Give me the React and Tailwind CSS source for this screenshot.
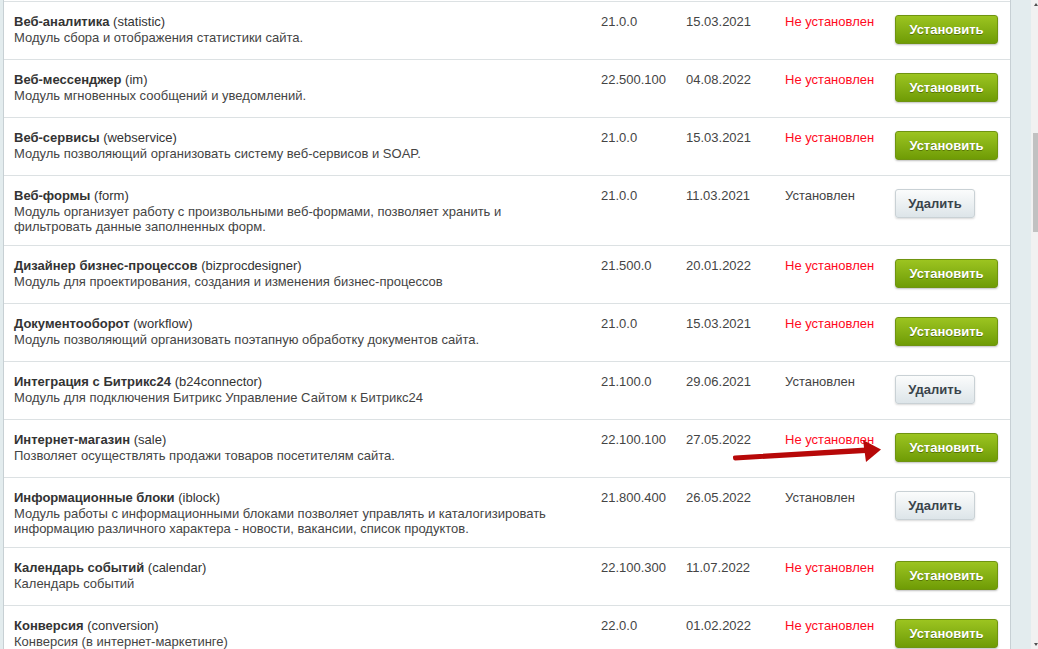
import React from "react";

const modules = [
  { name: "Веб-аналитика", id: "statistic", desc: ["Модуль сбора и отображения статистики сайта."], ver: "21.0.0", date: "15.03.2021", installed: false },
  { name: "Веб-мессенджер", id: "im", desc: ["Модуль мгновенных сообщений и уведомлений."], ver: "22.500.100", date: "04.08.2022", installed: false },
  { name: "Веб-сервисы", id: "webservice", desc: ["Модуль позволяющий организовать систему веб-сервисов и SOAP."], ver: "21.0.0", date: "15.03.2021", installed: false },
  { name: "Веб-формы", id: "form", desc: ["Модуль организует работу с произвольными веб-формами, позволяет хранить и", "фильтровать данные заполненных форм."], ver: "21.0.0", date: "11.03.2021", installed: true },
  { name: "Дизайнер бизнес-процессов", id: "bizprocdesigner", desc: ["Модуль для проектирования, создания и изменения бизнес-процессов"], ver: "21.500.0", date: "20.01.2022", installed: false },
  { name: "Документооборот", id: "workflow", desc: ["Модуль позволяющий организовать поэтапную обработку документов сайта."], ver: "21.0.0", date: "15.03.2021", installed: false },
  { name: "Интеграция с Битрикс24", id: "b24connector", desc: ["Модуль для подключения Битрикс Управление Сайтом к Битрикс24"], ver: "21.100.0", date: "29.06.2021", installed: true },
  { name: "Интернет-магазин", id: "sale", desc: ["Позволяет осуществлять продажи товаров посетителям сайта."], ver: "22.100.100", date: "27.05.2022", installed: false },
  { name: "Информационные блоки", id: "iblock", desc: ["Модуль работы с информационными блоками позволяет управлять и каталогизировать", "информацию различного характера - новости, вакансии, список продуктов."], ver: "21.800.400", date: "26.05.2022", installed: true },
  { name: "Календарь событий", id: "calendar", desc: ["Календарь событий"], ver: "22.100.300", date: "11.07.2022", installed: false },
  { name: "Конверсия", id: "conversion", desc: ["Конверсия (в интернет-маркетинге)"], ver: "22.0.0", date: "01.02.2022", installed: false },
];

function InstallButton() {
  return (
    <button className="h-[29px] w-[103px] rounded-[3px] border border-[#6f9410] bg-gradient-to-b from-[#9cc420] to-[#6f9c05] text-[13px] font-bold text-white shadow-[0_1px_2px_rgba(0,0,0,0.25)] [text-shadow:0_1px_0_rgba(60,80,0,0.6)]">
      Установить
    </button>
  );
}

function DeleteButton() {
  return (
    <button className="h-[29px] w-[80px] rounded-[3px] border border-[#c9d1d5] bg-gradient-to-b from-[#fbfcfc] to-[#dde5e9] text-[13px] font-bold text-[#3a444b] shadow-[0_1px_2px_rgba(0,0,0,0.15)]">
      Удалить
    </button>
  );
}

function Row({ m }) {
  return (
    <div className="flex items-start border-t border-[#dce1e3]">
      <div className="w-[597px] pl-[10px] pt-[12px] pb-[11px]">
        <div className="mb-[1px] text-[#333]">
          <span className="font-bold">{m.name}</span> ({m.id})
        </div>
        {m.desc.map((line) => (
          <div key={line} className="text-[#444]">{line}</div>
        ))}
      </div>
      <div className="w-[85px] pt-[12px] text-[#444]">{m.ver}</div>
      <div className="w-[99px] pt-[12px] text-[#444]">{m.date}</div>
      <div className={"w-[110px] pt-[12px] " + (m.installed ? "text-[#444]" : "text-[#ff0a1e]")}>
        {m.installed ? "Установлен" : "Не установлен"}
      </div>
      <div className="pt-[13px] pb-[15px]">{m.installed ? <DeleteButton /> : <InstallButton />}</div>
    </div>
  );
}

export default function App() {
  return (
    <div className="relative flex h-[649px] w-[1038px] overflow-hidden bg-[#e3ecee] font-['Liberation_Sans',Arial,sans-serif] text-[13px] leading-[15px]">
      <div className="ml-[3px] w-[1008px] shrink-0 border-x border-[#c7d0d4] bg-white pt-[1px]">
        {modules.map((m) => (
          <Row key={m.id} m={m} />
        ))}
      </div>
      <div className="flex-1" />
      <div className="relative w-[7px] shrink-0 bg-[#f1f1f1]">
        <div className="absolute left-[2px] top-[133px] h-[99px] w-[5px] bg-[#c1c1c1]" />
        <svg className="absolute left-[3px] top-[3px]" width="4" height="3" viewBox="0 0 4 3">
          <path d="M0 3 L2 0 L4 3 Z" fill="#505050" />
        </svg>
        <svg className="absolute left-[3px] top-[643px]" width="4" height="3" viewBox="0 0 4 3">
          <path d="M0 0 L4 0 L2 3 Z" fill="#505050" />
        </svg>
      </div>
      {/* red pointer arrow drawn over the table */}
      <svg className="pointer-events-none absolute left-0 top-0" width="1038" height="649">
        <path d="M733 456.5 Q733.5 455.5 735 455.5 L866 447.5 L866 453 L735 460.5 Q733 460 733 458 Z" fill="#b70808" />
        <path d="M863 440 L881 449.5 L866 462 Z" fill="#b70808" />
      </svg>
    </div>
  );
}
